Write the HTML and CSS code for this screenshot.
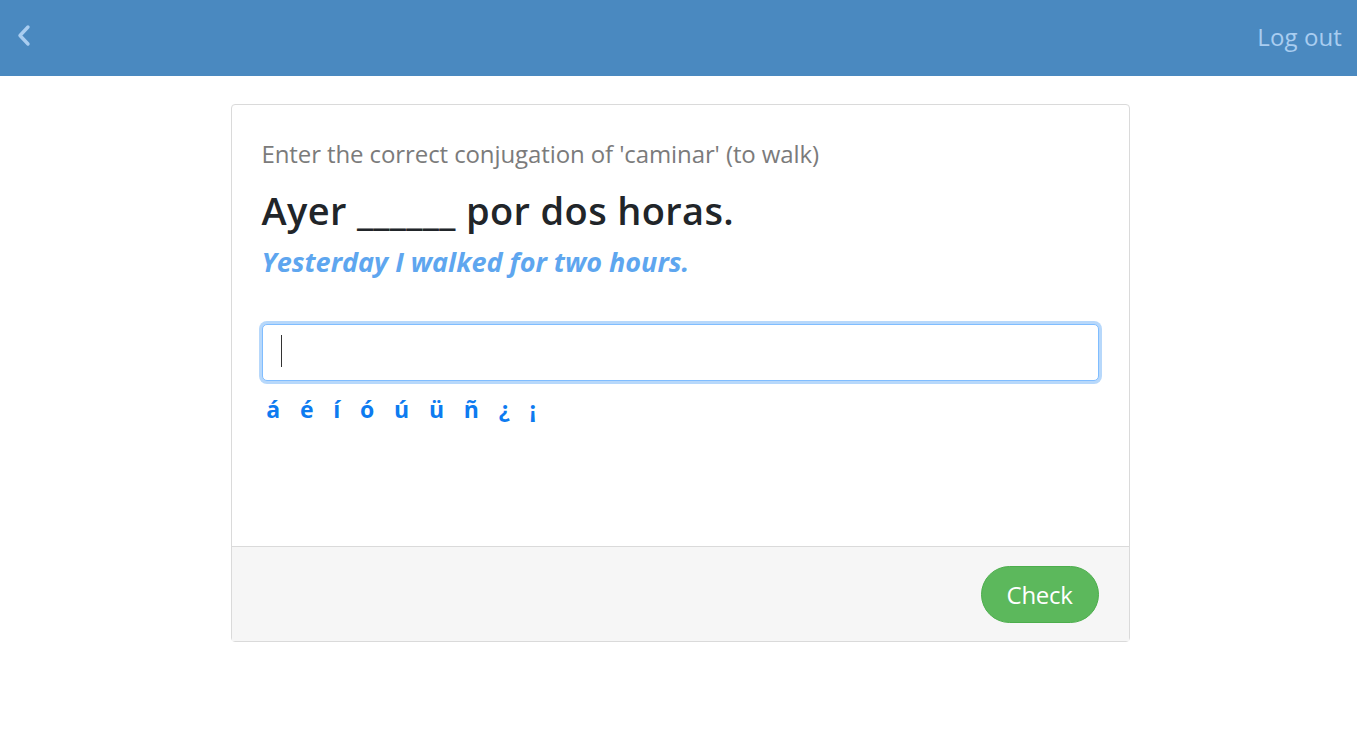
FILE: index.html
```html
<!DOCTYPE html>
<html lang="en">
<head>
  <meta charset="UTF-8" />
  <meta name="viewport" content="width=device-width, initial-scale=1" />
  <title>Conjugation practice</title>
  <link rel="stylesheet" href="styles.css">
</head>
<body>
  <header class="topbar">
    <a class="back" href="#" aria-label="Back">
      <svg viewBox="0 0 16 24" aria-hidden="true">
        <path d="M12 3 4 11.5l8 8.5" />
      </svg>
    </a>
    <a class="logout" href="#">Log out</a>
  </header>

  <main class="page">
    <section class="card">
      <div class="card-body">
        <p class="prompt">Enter the correct conjugation of 'caminar' (to walk)</p>
        <h1 class="sentence">Ayer ______ por dos horas.</h1>
        <p class="translation">Yesterday I walked for two hours.</p>

        <div class="answer">
          <span class="caret"></span>
          <input class="answer-input" type="text" aria-label="Answer" />
        </div>

        <!-- Caracteres especiais -->
        <div class="accents">
          <button class="accent">á</button>
          <button class="accent">é</button>
          <button class="accent">í</button>
          <button class="accent">ó</button>
          <button class="accent">ú</button>
          <button class="accent">ü</button>
          <button class="accent">ñ</button>
          <button class="accent">¿</button>
          <button class="accent">¡</button>
        </div>
      </div>

      <div class="card-footer">
        <button class="btn-check">Check</button>
      </div>
    </section>
  </main>
</body>
</html>
```

FILE: styles.css
```css
*, *::before, *::after {
  box-sizing: border-box;
}

body {
  margin: 0;
  font-family: 'Open Sans', 'Noto Sans', sans-serif;
  color: #212529;
  background: #fff;
}

/* Barra superior */
.topbar {
  height: 76px;
  background: #4a89c0;
  display: flex;
  align-items: center;
  justify-content: space-between;
  padding: 0 15px 4px 16px;
}

.back {
  display: flex;
  width: 20px;
  height: 24px;
}

.back svg {
  width: 16px;
  height: 24px;
  fill: none;
  stroke: #a9cdf0;
  stroke-width: 3.4;
  stroke-linecap: round;
  stroke-linejoin: round;
}

.logout {
  color: #a9cdf0;
  text-decoration: none;
  font-size: 24px;
  letter-spacing: 0.1px;
}

/* Cartão */
.page {
  display: flex;
  justify-content: center;
  padding: 28px 0 0 3px;
}

.card {
  width: 899px;
  border: 1px solid #dadada;
  border-radius: 4px;
  display: flex;
  flex-direction: column;
}

.card-body {
  height: 441px;
  padding: 34px 30px 0;
}

.prompt {
  margin: 0;
  font-size: 24px;
  line-height: 30px;
  color: #7b7b7b;
  letter-spacing: -0.1px;
}

.sentence {
  margin: 18px 0 0;
  font-size: 38px;
  line-height: 46px;
  font-weight: 600;
  letter-spacing: 0.35px;
}

.translation {
  margin: 11px 0 0;
  font-size: 27px;
  line-height: 36px;
  font-weight: 700;
  font-style: italic;
  color: #5ea6ef;
  letter-spacing: 0;
}

.answer {
  position: relative;
  margin-top: 44px;
}

.answer-input {
  width: 100%;
  height: 57px;
  border: 1px solid #80bdff;
  border-radius: 5px;
  box-shadow: 0 0 0 3px #b7d8fb;
  outline: none;
  font-size: 20px;
  padding: 0 20px;
  font-family: inherit;
}

.caret {
  position: absolute;
  left: 19px;
  top: 11px;
  width: 1px;
  height: 32px;
  background: #333;
}

.accents {
  display: flex;
  margin: 12px 0 0 -5px;
}

.accent {
  background: none;
  border: none;
  padding: 0 10px 0 9.75px;
  font-family: inherit;
  font-size: 23px;
  font-weight: 700;
  color: #0d7bf0;
  cursor: pointer;
  line-height: 32px;
}

.card-footer {
  background: #f6f6f6;
  border-top: 1px solid #dadada;
  height: 95px;
  display: flex;
  align-items: center;
  justify-content: flex-end;
  padding: 0 30px;
}

.btn-check {
  background: #5cb85c;
  border: 1px solid #4cae4c;
  color: #fff;
  font-family: inherit;
  font-size: 24px;
  height: 57px;
  padding: 0 25px;
  border-radius: 29px;
  cursor: pointer;
  letter-spacing: -0.3px;
}
```
